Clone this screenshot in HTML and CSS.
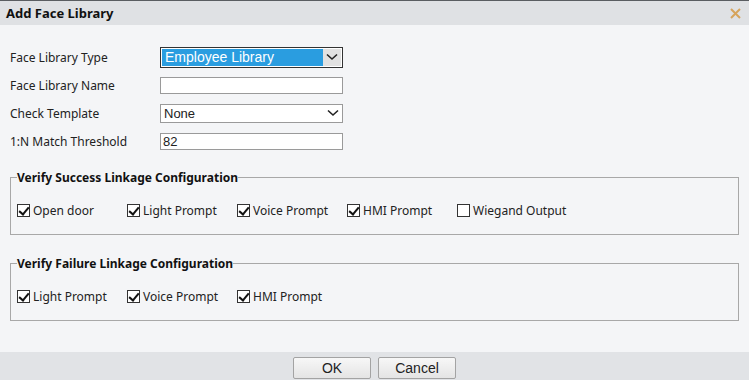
FILE: index.html
```html
<!DOCTYPE html>
<html lang="en">
<head>
    <meta charset="UTF-8">
    <title>Add Face Library</title>
    <link rel="stylesheet" href="styles.css">
</head>
<body>
    <div class="dialog">
        <div class="title-bar">
            <span class="title">Add Face Library</span>
            <svg class="close" width="11" height="11" viewBox="0 0 11 11"><path d="M1 1 L10 10 M10 1 L1 10" stroke="#d6a45c" stroke-width="2"/></svg>
        </div>

        <div class="content">
            <div class="form-row">
                <label>Face Library Type</label>
                <div class="select select-active">
                    <span class="select-value">Employee Library</span>
                    <span class="select-btn">
                        <svg width="12" height="8" viewBox="0 0 12 8"><path d="M1 1.5 L6 6 L11 1.5" fill="none" stroke="#222" stroke-width="1.6"/></svg>
                    </span>
                </div>
            </div>
            <div class="form-row">
                <label>Face Library Name</label>
                <div class="text-input"></div>
            </div>
            <div class="form-row">
                <label>Check Template</label>
                <div class="select">
                    <span class="select-value">None</span>
                    <span class="select-btn">
                        <svg width="12" height="8" viewBox="0 0 12 8"><path d="M1 1.5 L6 6 L11 1.5" fill="none" stroke="#222" stroke-width="1.6"/></svg>
                    </span>
                </div>
            </div>
            <div class="form-row">
                <label>1:N Match Threshold</label>
                <div class="text-input">82</div>
            </div>

            <fieldset class="group group-success">
                <legend>Verify Success Linkage Configuration</legend>
                <div class="checks">
                    <span class="check"><span class="box on"></span>Open door</span>
                    <span class="check"><span class="box on"></span>Light Prompt</span>
                    <span class="check"><span class="box on"></span>Voice Prompt</span>
                    <span class="check"><span class="box on"></span>HMI Prompt</span>
                    <span class="check"><span class="box"></span>Wiegand Output</span>
                </div>
            </fieldset>

            <fieldset class="group">
                <legend>Verify Failure Linkage Configuration</legend>
                <div class="checks">
                    <span class="check"><span class="box on"></span>Light Prompt</span>
                    <span class="check"><span class="box on"></span>Voice Prompt</span>
                    <span class="check"><span class="box on"></span>HMI Prompt</span>
                </div>
            </fieldset>
        </div>

        <div class="footer">
            <button class="btn">OK</button>
            <button class="btn">Cancel</button>
        </div>
    </div>
</body>
</html>
```

FILE: styles.css
```css
body {
    margin: 0;
    padding: 0;
    font-family: "Noto Sans", "Open Sans", sans-serif;
    font-size: 12px;
    color: #222;
    background-color: #f4f5f7;
}

.dialog {
    width: 749px;
    height: 380px;
    display: flex;
    flex-direction: column;
    overflow: hidden;
}

.title-bar {
    height: 24px;
    border-top: 1px solid #5a5d61;
    background-color: #dfe1e4;
    display: flex;
    align-items: center;
    justify-content: space-between;
    padding: 0 8px 0 6px;
}

.title {
    font-weight: bold;
    font-size: 13px;
    color: #111;
}

.content {
    height: 327px;
    padding: 18px 10px 0 10px;
    box-sizing: border-box;
}

.form-row {
    display: flex;
    align-items: center;
    height: 28px;
}

.form-row label {
    width: 150px;
}

.text-input {
    width: 183px;
    height: 17px;
    box-sizing: border-box;
    border: 1px solid #9a9a9a;
    background-color: #fff;
    font-family: "Liberation Sans", Arial, sans-serif;
    font-size: 13px;
    line-height: 15px;
    padding-left: 2px;
}

.select {
    width: 183px;
    height: 19px;
    box-sizing: border-box;
    border: 1px solid #9a9a9a;
    background-color: #fff;
    display: flex;
    align-items: center;
    font-family: "Liberation Sans", Arial, sans-serif;
    font-size: 13px;
}

.select-value {
    flex: 1;
    padding-left: 3px;
}

.select-btn {
    width: 18px;
    display: flex;
    align-items: center;
    justify-content: center;
}

.select-active {
    height: 21px;
    border: 1px solid #333;
    padding: 1px;
}

.select-active .select-value {
    background-color: #2a9de0;
    color: #fff;
    align-self: stretch;
    line-height: 17px;
    font-size: 14px;
}

.select-active .select-btn {
    background-color: #e1e1e1;
    align-self: stretch;
}

.group {
    margin: 0;
    border: 1px solid #a8a8a8;
    padding: 0 6px;
    height: 66px;
    box-sizing: border-box;
}

.group-success {
    margin-top: 14px;
    margin-bottom: 20px;
}

.group legend {
    font-weight: bold;
    padding: 0;
    color: #111;
}

.checks {
    display: flex;
    margin-top: 16px;
}

.check {
    width: 110px;
    display: flex;
    align-items: center;
}

.box {
    width: 13px;
    height: 13px;
    box-sizing: border-box;
    border: 1px solid #333;
    background-color: #fff;
    margin-right: 3px;
    position: relative;
}

.box.on::after {
    content: "";
    position: absolute;
    left: 3px;
    top: 0px;
    width: 4px;
    height: 8px;
    border: solid #111;
    border-width: 0 2px 2px 0;
    transform: rotate(40deg);
}

.footer {
    flex: 1;
    background-color: #e1e3e6;
    display: flex;
    justify-content: center;
    align-items: flex-start;
    padding-top: 5px;
    gap: 7px;
}

.btn {
    width: 78px;
    height: 22px;
    border: 1px solid #a3a3a3;
    border-radius: 2px;
    background: linear-gradient(#f7f7f7, #e4e4e4);
    font-family: "Liberation Sans", Arial, sans-serif;
    font-size: 14px;
    color: #222;
    padding: 0;
}
```
